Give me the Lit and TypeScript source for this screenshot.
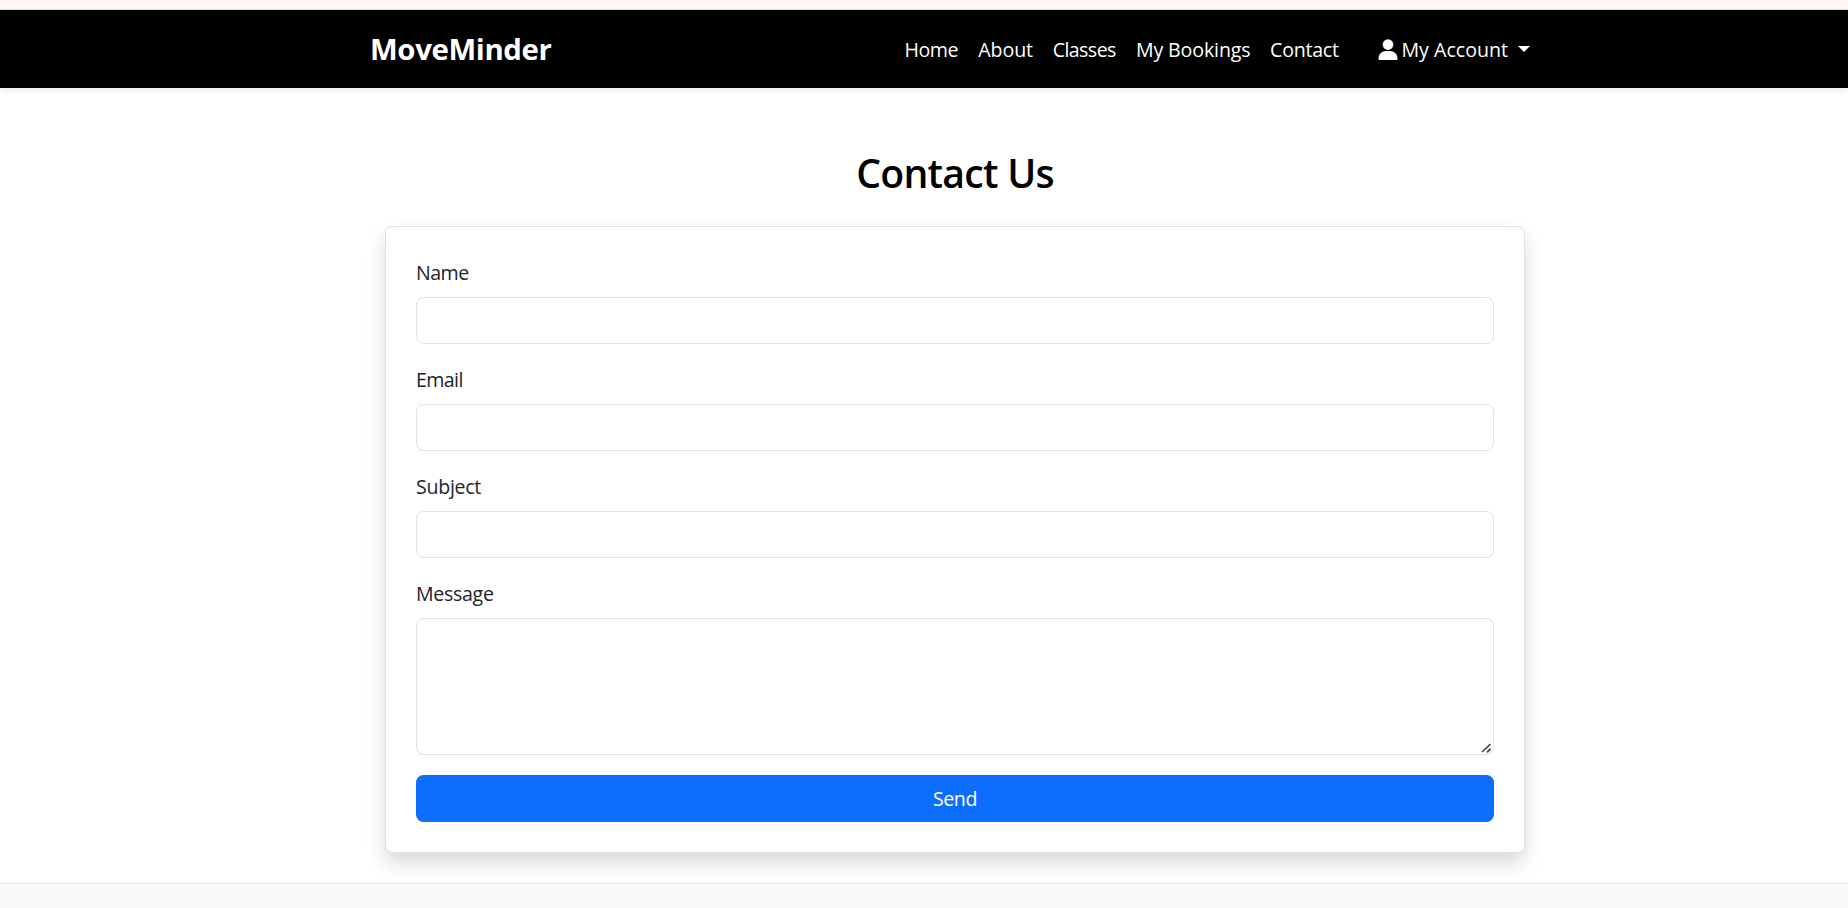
import { LitElement, html, css } from "lit";
import { customElement } from "lit/decorators.js";

@customElement("app-root")
export class AppRoot extends LitElement {
  static styles = css`
    :host {
      display: flex;
      flex-direction: column;
      height: 908px;
      overflow: hidden;
      background: #fff;
      color: #212529;
      font-family: "Open Sans", "Noto Sans", sans-serif;
      font-size: 19.6px;
      line-height: 30px;
    }
    * { box-sizing: border-box; }
    .strip { flex: none; height: 10px; background: #fff6f4; border-bottom: 1px solid #e9dddc; }
    .navbar {
      flex: none;
      display: flex;
      align-items: center;
      justify-content: space-between;
      height: 78px;
      padding: 0 318px 0 370px;
      background: #000;
      box-shadow: 0 2.5px 5px rgba(0, 0, 0, 0.075);
      color: #fff;
      white-space: nowrap;
    }
    a { color: inherit; text-decoration: none; }
    .brand { font-size: 29.4px; font-weight: 700; line-height: 45px; letter-spacing: -0.38px; }
    .links { display: flex; align-items: center; gap: 20px; padding-top: 1px; }
    .home { width: 53.6px; letter-spacing: -0.48px; }
    .about { width: 54.5px; letter-spacing: -0.05px; }
    .classes { width: 63.3px; letter-spacing: -0.57px; }
    .bookings { width: 114.2px; letter-spacing: -0.13px; }
    .contact { width: 68.4px; letter-spacing: -0.27px; }
    .account { display: flex; align-items: center; margin-left: 19px; letter-spacing: 0; }
    .user { width: 20px; height: 23px; margin: -1px 4px 0 0; }
    .account-text { width: 105.5px; }
    .caret {
      margin: -2px 0 0 11px;
      border: 6px solid transparent;
      border-top-color: #fff;
      border-bottom: 0;
    }
    .main { flex: none; width: 1140px; height: 795px; margin-left: 385px; padding-top: 61px; }
    h1 {
      margin: 0 0 29px;
      color: #000;
      font-size: 39.2px;
      font-weight: 600;
      line-height: 48px;
      letter-spacing: -0.75px;
      text-align: center;
    }
    .card {
      height: 627px;
      padding: 30px;
      border: 1px solid #dee2e6;
      border-radius: 7.5px;
      background: #fff;
      box-shadow: 0 10px 20px rgba(0, 0, 0, 0.15);
    }
    label { display: block; height: 30px; margin-bottom: 10px; padding-top: 1px; }
    .name { letter-spacing: -0.52px; }
    .email { letter-spacing: -0.62px; }
    .subject { letter-spacing: -0.29px; }
    .message { letter-spacing: -0.32px; }
    input, textarea {
      display: block;
      width: 100%;
      height: 47px;
      margin: 0 0 20px;
      padding: 7px 15px;
      border: 1px solid #dee2e6;
      border-radius: 7.5px;
      background: #fff;
      font: inherit;
      outline: none;
    }
    .area { position: relative; }
    textarea { height: 137px; resize: none; }
    .grip { position: absolute; right: 2px; bottom: 2px; width: 11px; height: 10px; }
    button {
      display: block;
      width: 100%;
      height: 47px;
      padding: 1px 0 0;
      border: 0;
      border-radius: 7.5px;
      background: #0d6efd;
      color: #fff;
      font: inherit;
      letter-spacing: -0.42px;
    }
    .footer { flex: 1; background: #f8f9fa; border-top: 1px solid #dee2e6; }
  `;

  private field(id: string, text: string) {
    return html`<label class=${id} for=${id}>${text}</label><input id=${id} />`;
  }

  render() {
    return html`
      <div class="strip"></div>
      <nav class="navbar">
        <a class="brand" href="#">MoveMinder</a>
        <div class="links">
          <a class="home" href="#">Home</a>
          <a class="about" href="#">About</a>
          <a class="classes" href="#">Classes</a>
          <a class="bookings" href="#">My Bookings</a>
          <a class="contact" href="#">Contact</a>
          <a class="account" href="#">
            <svg class="user" viewBox="0 0 20 23" fill="#fff">
              <circle cx="10" cy="6.6" r="5.3" />
              <path d="M.5 21c0-4.800 3.300-8 7.500-8h4c4.200 0 7.500 3.200 7.500 8 0 .6-.4 1-1 1h-17c-.6 0-1-.4-1-1z" />
            </svg>
            <span class="account-text">My Account</span>
            <span class="caret"></span>
          </a>
        </div>
      </nav>
      <main class="main">
        <h1>Contact Us</h1>
        <form class="card">
          ${this.field("name", "Name")}
          ${this.field("email", "Email")}
          ${this.field("subject", "Subject")}
          <label class="message" for="message">Message</label>
          <div class="area">
            <textarea id="message"></textarea>
            <svg class="grip" viewBox="0 0 11 10" stroke="#444" stroke-width="1.7" fill="none">
              <path d="M1 9L9.500 1M6 9.300L9.700 5.800" />
            </svg>
          </div>
          <button type="button">Send</button>
        </form>
      </main>
      <footer class="footer"></footer>
    `;
  }
}
